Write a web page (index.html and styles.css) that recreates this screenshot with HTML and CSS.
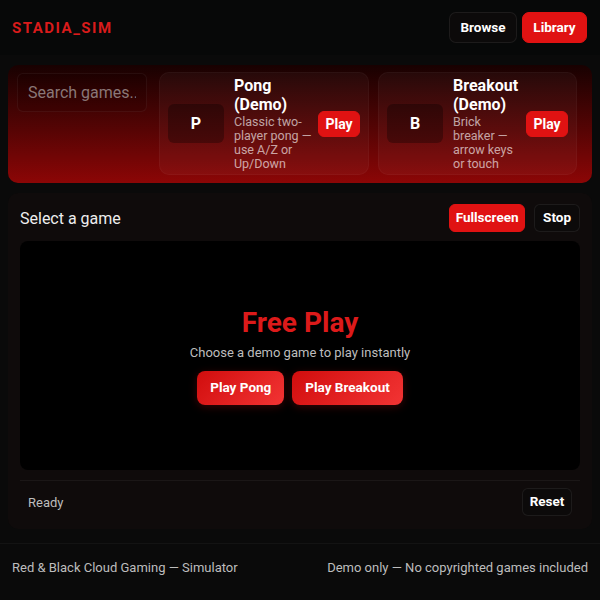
FILE: index.html
```html
<!DOCTYPE html>
<html lang="en">
<head>
<meta charset="utf-8">
<title>STADIA_SIM</title>
<link rel="stylesheet" href="styles.css">
</head>
<body>
<header class="topbar">
  <div class="logo">STADIA_SIM</div>
  <nav class="nav">
    <button class="btn btn-dark">Browse</button>
    <button class="btn btn-red">Library</button>
  </nav>
</header>

<section class="hero">
  <input class="search" type="text" placeholder="Search games..">
  <div class="card card-pong">
    <div class="thumb">P</div>
    <div class="info">
      <div class="title">Pong (Demo)</div>
      <div class="desc">Classic two-player pong — use A/Z or Up/Down</div>
    </div>
    <button class="btn btn-red btn-play">Play</button>
  </div>
  <div class="card card-breakout">
    <div class="thumb">B</div>
    <div class="info">
      <div class="title">Breakout (Demo)</div>
      <div class="desc">Brick breaker — arrow keys or touch</div>
    </div>
    <button class="btn btn-red btn-play">Play</button>
  </div>
</section>

<main class="player">
  <div class="player-head">
    <div class="player-title">Select a game</div>
    <div class="player-actions">
      <button class="btn btn-red btn-sm btn-full">Fullscreen</button>
      <button class="btn btn-dark btn-sm">Stop</button>
    </div>
  </div>
  <div class="screen">
    <div class="screen-title">Free Play</div>
    <div class="screen-sub">Choose a demo game to play instantly</div>
    <div class="screen-actions">
      <button class="btn btn-grad">Play Pong</button>
      <button class="btn btn-grad">Play Breakout</button>
    </div>
  </div>
  <div class="status">
    <span class="status-text">Ready</span>
    <button class="btn btn-dark btn-sm btn-reset">Reset</button>
  </div>
</main>

<footer class="footer">
  <span>Red &amp; Black Cloud Gaming — Simulator</span>
  <span>Demo only — No copyrighted games included</span>
</footer>
</body>
</html>
```

FILE: styles.css
```css
* { box-sizing: border-box; }

body {
  margin: 0;
  background: #0a0a0a;
  color: #fff;
  font-family: Roboto, "Liberation Sans", Arial, sans-serif;
}

.btn {
  font-family: inherit;
  font-weight: 700;
  font-size: 13.5px;
  color: #fff;
  border: 1px solid transparent;
  border-radius: 7px;
  cursor: pointer;
  padding: 0 10px;
  line-height: 1;
}

.btn-red {
  background: #e01212;
  border-color: #e01212;
}

.btn-dark {
  background: #0c0a0a;
  border-color: rgba(255, 255, 255, 0.07);
}

/* Header */
.topbar {
  height: 55px;
  padding: 0 13px 0 12px;
  display: flex;
  align-items: center;
  justify-content: space-between;
  background: #070808;
}

.logo {
  color: #d91b1b;
  font-weight: 700;
  font-size: 15px;
  letter-spacing: 1.5px;
}

.nav {
  display: flex;
  gap: 5px;
}

.nav .btn {
  height: 31px;
}

.nav .btn-dark { width: 68px; }
.nav .btn-red { width: 65px; }

/* Hero */
.hero {
  margin: 10px 8px 0;
  height: 118px;
  border-radius: 10px;
  background: linear-gradient(180deg, #180101 0%, #560404 55%, #8c0606 100%);
  padding: 7px 15px 8px 9px;
  display: flex;
  align-items: flex-start;
}

.search {
  width: 130px;
  height: 39px;
  margin-top: 1px;
  margin-right: 12px;
  border-radius: 6px;
  background: rgba(0, 0, 0, 0.08);
  border: 1px solid rgba(255, 255, 255, 0.05);
  color: #fff;
  font-family: inherit;
  font-size: 16px;
  padding: 0 10px;
}

.search::placeholder {
  color: #8a7777;
}

.card {
  height: 103px;
  border-radius: 10px;
  background: rgba(255, 255, 255, 0.035);
  border: 1px solid rgba(255, 255, 255, 0.035);
  padding: 0 8px;
  display: flex;
  align-items: center;
}

.card-pong {
  width: 210px;
  margin-right: 9px;
}

.card-breakout {
  width: 199px;
}

.thumb {
  width: 56px;
  height: 39px;
  flex: none;
  border-radius: 6px;
  background: rgba(0, 0, 0, 0.3);
  display: flex;
  align-items: center;
  justify-content: center;
  font-weight: 700;
  font-size: 16px;
}

.info {
  flex: 1;
  margin: 0 6px 0 10px;
  min-width: 0;
}

.title {
  font-weight: 700;
  font-size: 16px;
  line-height: 19px;
}

.desc {
  font-size: 12.5px;
  line-height: 14px;
  color: rgba(255, 255, 255, 0.64);
  margin-top: 1px;
}

.btn-play {
  width: 42px;
  height: 26px;
  padding: 0;
  flex: none;
  border-radius: 6px;
  font-size: 14px;
}

/* Player */
.player {
  margin: 10px 8px 0;
  background: #0f0b0b;
  border-radius: 10px;
  padding: 11px 12px 6px;
}

.player-head {
  display: flex;
  align-items: center;
  justify-content: space-between;
  height: 28px;
}

.player-title {
  font-size: 16px;
  color: #eee;
}

.player-actions {
  display: flex;
  gap: 9px;
}

.btn-sm {
  height: 28px;
  padding: 0 8px;
  border-radius: 6px;
}

.btn-full {
  width: 76px;
  padding: 0;
}

.screen {
  margin-top: 9px;
  height: 229px;
  background: #000;
  border-radius: 8px;
  display: flex;
  flex-direction: column;
  align-items: center;
  justify-content: center;
}

.screen-title {
  color: #dc1a1a;
  font-weight: 700;
  font-size: 28px;
  line-height: 32px;
}

.screen-sub {
  color: #bdbdbd;
  font-size: 13px;
  line-height: 15px;
  margin-top: 6px;
}

.screen-actions {
  display: flex;
  gap: 8px;
  margin-top: 11px;
}

.btn-grad {
  height: 34px;
  padding: 0 13px;
  border-radius: 8px;
  background: linear-gradient(135deg, #d10d0d 0%, #f23434 100%);
  border: none;
  box-shadow: 0 2px 8px rgba(220, 20, 20, 0.25);
}

.status {
  margin-top: 10px;
  border-top: 1px solid rgba(255, 255, 255, 0.05);
  padding: 7px 8px;
  display: flex;
  align-items: center;
  justify-content: space-between;
}

.status-text {
  font-size: 13px;
  color: #bdbdbd;
}

.btn-reset {
  width: 50px;
  padding: 0;
}

/* Footer */
.footer {
  margin-top: 14px;
  border-top: 1px solid rgba(255, 255, 255, 0.04);
  padding: 16px 12px;
  display: flex;
  justify-content: space-between;
  font-size: 13px;
  color: #bdbdbd;
}
```
